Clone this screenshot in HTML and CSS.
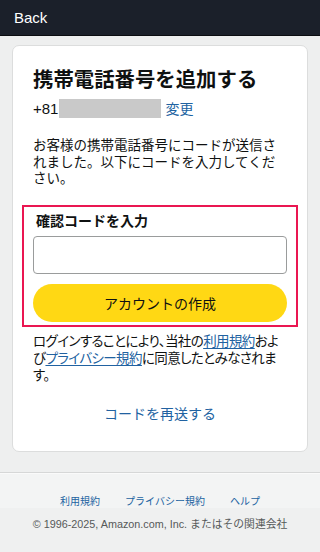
FILE: index.html
```html
<!DOCTYPE html>
<html lang="ja">
<head>
<meta charset="utf-8">
<meta name="viewport" content="width=device-width, initial-scale=1">
<link rel="stylesheet" href="styles.css">
</head>
<body>
<header class="topbar"><span class="back">Back</span></header>
<main class="page">
  <section class="card">
    <h1 class="title">携帯電話番号を追加する</h1>
    <div class="phone-row"><span class="cc">+81</span><span class="masked"></span><a class="link">変更</a></div>
    <p class="desc">お客様の携帯電話番号にコードが送信されました。以下にコードを入力してください。</p>
    <div class="highlight">
      <label class="label">確認コードを入力</label>
      <div class="input"></div>
      <div class="btn">アカウントの作成</div>
    </div>
    <p class="legal">ログインすることにより、当社の<a class="link ul">利用規約</a>およ<br>び<a class="link ul">プライバシー規約</a>に同意したとみなされま<br>す。</p>
    <div class="resend"><a class="link">コードを再送する</a></div>
  </section>
</main>
<footer class="footer">
  <nav class="flinks"><a class="link">利用規約</a><a class="link">プライバシー規約</a><a class="link">ヘルプ</a></nav>
  <div class="copy">© 1996-2025, Amazon.com, Inc. またはその関連会社</div>
</footer>
</body>
</html>
```
FILE: styles.css
```css
* { box-sizing: border-box; }
html, body { margin: 0; padding: 0; }
body {
  font-family: "Liberation Sans", "Noto Sans CJK JP", sans-serif;
  color: #0f1111;
  background: #eeefef;
  width: 320px;
  height: 552px;
  overflow: hidden;
}
.topbar {
  height: 36px;
  background: #1b202a;
  border-bottom: 1px solid #0b0d11;
  display: flex;
  align-items: center;
  padding-left: 14px;
}
.back { color: #fff; font-size: 15px; }
.page { padding: 9px 12px 20px; }
.card {
  background: #fff;
  border: 1px solid #dcdddd;
  border-radius: 7px;
  padding: 18px 20px 20px;
  height: 407px;
}
.title {
  margin: 0;
  font-size: 20.4px;
  line-height: 28px;
  font-weight: 700;
  font-family: "Noto Sans CJK JP", sans-serif;
}
.phone-row {
  display: flex;
  align-items: center;
  margin-top: 5px;
  height: 22px;
  font-size: 14px;
}
.cc { font-size: 15px; }
.masked {
  width: 102px;
  height: 19px;
  background: #c9c9c9;
  margin: 0 4px 0 1px;
}
.link { color: #2162a1; text-decoration: none; }
.ul { text-decoration: underline; text-underline-offset: 2px; }
.phone-row .link { font-size: 14px; font-family: "Noto Sans CJK JP", sans-serif; }
.desc {
  margin: 17px 0 0;
  font-size: 13.5px;
  line-height: 16.5px;
  font-family: "Noto Sans CJK JP", sans-serif;
}
.highlight {
  margin: 19px -11px 0;
  border: 2px solid #ea1651;
  padding: 3px 9px 3px;
  display: flex;
  flex-direction: column;
}
.label {
  font-size: 14px;
  line-height: 20px;
  font-weight: 700;
  padding-left: 3px;
  font-family: "Noto Sans CJK JP", sans-serif;
}
.input {
  margin-top: 6px;
  height: 38px;
  border: 1px solid #9a9c9c;
  border-radius: 4px;
}
.btn {
  margin-top: 10px;
  height: 38px;
  border-radius: 19px;
  background: #ffd814;
  display: flex;
  align-items: center;
  justify-content: center;
  font-size: 14px;
  font-family: "Noto Sans CJK JP", sans-serif;
}
.legal {
  margin: 5px 0 0;
  font-size: 13.5px;
  line-height: 17px;
  white-space: nowrap;
  font-feature-settings: "palt";
  letter-spacing: -0.6px;
  font-family: "Noto Sans CJK JP", sans-serif;
}
.resend {
  margin-top: 20px;
  text-align: center;
  font-size: 14px;
  font-family: "Noto Sans CJK JP", sans-serif;
}
.footer {
  border-top: 1px solid #d6d7d7;
  background: linear-gradient(#f3f4f4 0, #f3f4f4 35px, #eff0f0 35px);
  height: 80px;
  box-shadow: inset 0 1px 0 #fafafa;
}
.flinks {
  display: flex;
  justify-content: center;
  gap: 25px;
  padding-top: 20px;
  font-size: 10px;
  line-height: 16px;
  font-family: "Noto Sans CJK JP", sans-serif;
}
.copy {
  text-align: center;
  margin-top: 7px;
  font-size: 10.8px;
  line-height: 16px;
  color: #565959;
}
```
